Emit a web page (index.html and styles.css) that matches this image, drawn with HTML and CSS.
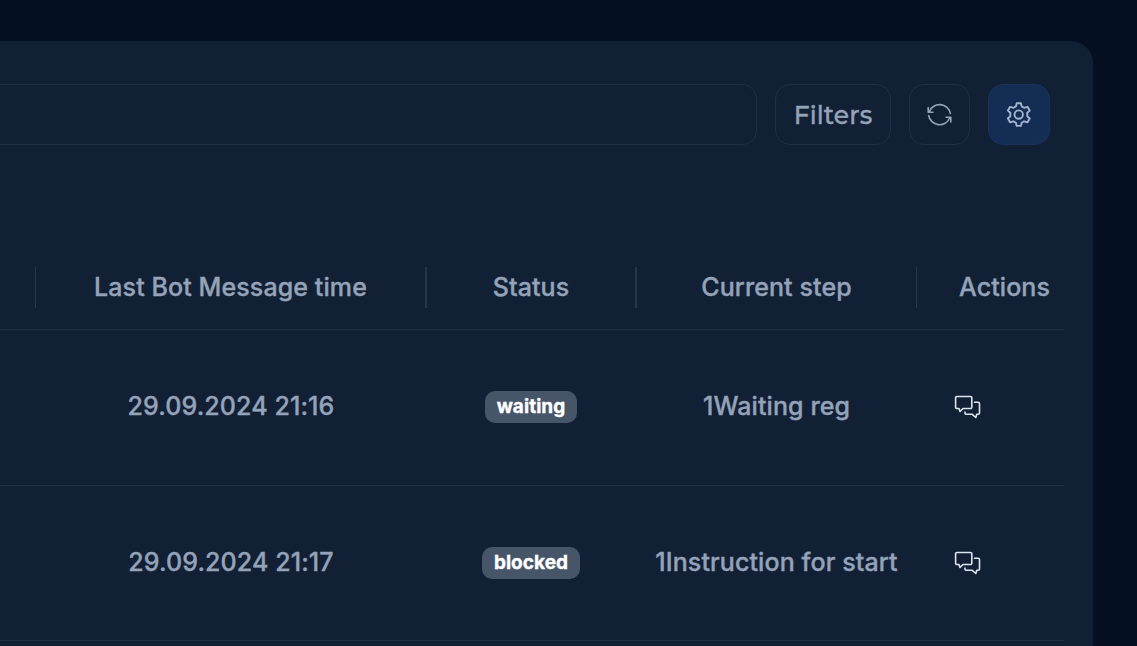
FILE: index.html
```html
<!DOCTYPE html>
<html lang="en">
<head>
<meta charset="utf-8">
<title>Users</title>
<link rel="stylesheet" href="styles.css">
</head>
<body>
<svg class="sprite" width="0" height="0">
  <symbol id="chat" viewBox="0 0 28 26">
    <path d="M3.900 2.500H17.500a1.300 1.300 0 0 1 1.300 1.300v9.400a1.300 1.300 0 0 1-1.300 1.300H10L7 17.500L6 14.500H3.900A1.300 1.300 0 0 1 2.600 13.200V3.800a1.300 1.300 0 0 1 1.300-1.300z"/>
    <path d="M21.500 8.300h3.700a1.300 1.300 0 0 1 1.300 1.300v9.400a1.300 1.300 0 0 1-1.300 1.300H23.800L22.800 23.500L19.300 20.300H13.300a1.300 1.300 0 0 1-1.300-1.300v-1"/>
  </symbol>
</svg>
<main class="panel">
  <div class="toolbar">
    <div class="search"></div>
    <button class="btn filters">Filters</button>
    <button class="btn square" aria-label="Refresh">
      <svg width="28" height="28" viewBox="0 0 28 28"><path d="M3.300 10.500a11 11 0 0 1 21 2M23.700 17a11 11 0 0 1-21-2.500M2.200 6.500v4.700h4.700M24.800 21v-4.700h-4.700"/></svg>
    </button>
    <button class="btn square active" aria-label="Settings">
      <svg width="28" height="28" viewBox="0 0 28 28"><path d="M11.700 2.200h4.200l.8 3.200 2.400 1.400 3.400-1 2.200 3.800-2.400 2.200v3.400l2.400 2.300-2.200 3.800-3.400-1-2.400 1.400-.8 3.200h-4.200l-.8-3.200-2.400-1.400-3.400 1-2.200-3.800 2.400-2.300v-3.400L2.900 9.600l2.200-3.800 3.400 1 2.400-1.400z"/><circle cx="13.700" cy="13.600" r="4.200"/></svg>
    </button>
  </div>
  <div class="table">
    <div class="row head">
      <div class="cell">Last Bot Message time</div><div class="cell">Status</div><div class="cell">Current step</div><div class="cell last">Actions</div>
    </div>
    <div class="row">
      <div class="cell">29.09.2024 21:16</div><div class="cell"><span class="badge">waiting</span></div><div class="cell">1Waiting reg</div><div class="cell last"><svg class="chat" width="28" height="26"><use href="#chat"/></svg></div>
    </div>
    <div class="row">
      <div class="cell">29.09.2024 21:17</div><div class="cell"><span class="badge">blocked</span></div><div class="cell">1Instruction for start</div><div class="cell last"><svg class="chat" width="28" height="26"><use href="#chat"/></svg></div>
    </div>
  </div>
</main>
</body>
</html>
```

FILE: styles.css
```css
* { box-sizing: border-box; }
body { margin: 0; padding-top: 41px; height: 646px; overflow: hidden; background: #041021; font-family: Inter, sans-serif; color: #94a3b8; }
.sprite { display: block; height: 0; }
svg { fill: none; stroke: currentColor; stroke-width: 1.600; stroke-linecap: round; stroke-linejoin: round; }
.panel { width: 1093px; height: 605px; background: #122036; border-top-right-radius: 22px; padding-top: 43px; }
.toolbar { display: flex; gap: 18px; width: 1050px; height: 61px; }
.search { flex: 1; border: 1px solid #202f42; border-left: 0; border-radius: 0 15px 15px 0; }
.btn { display: flex; align-items: center; justify-content: center; padding: 0; border: 1px solid #202f42; border-radius: 15px; background: transparent; color: #94a3b8; }
.filters { width: 116px; font: 500 25px Montserrat, Inter, sans-serif; letter-spacing: .15px; -webkit-text-stroke: .35px; }
.square { width: 61px; }
.active { width: 62px; background: #142d54; border-color: #1b3356; color: #a3b4cf; }
.active svg { stroke-width: 1.900; }
.table { width: 1064px; margin-top: 101px; font-size: 25px; font-weight: 500; letter-spacing: .1px; -webkit-text-stroke: .35px; }
.row { display: grid; grid-template-columns: 35px 390px 210px 281px 148px; height: 155.500px; border-bottom: 1px solid #202f42; align-items: center; }
.row::before { content: ""; }
.cell { display: flex; align-items: center; justify-content: center; padding: 0 0 2px 2px; white-space: nowrap; }
.head { height: 84px; }
.head .cell { height: 41px; padding-left: 0; border-left: 1px solid #263548; }
.head .cell:nth-child(2), .head .cell:nth-child(3) { border-left-width: 2px; }
.cell.last { justify-content: flex-start; padding-left: 37px; }
.head .cell.last { padding-left: 42px; }
.badge { height: 32px; margin-top: 2px; padding: 0 12px; border-radius: 10px; background: #475569; color: #fff; font-size: 19px; font-weight: 700; line-height: 31px; letter-spacing: .05px; }
.chat { margin-top: 2px; color: #dbe4f0; }
```
